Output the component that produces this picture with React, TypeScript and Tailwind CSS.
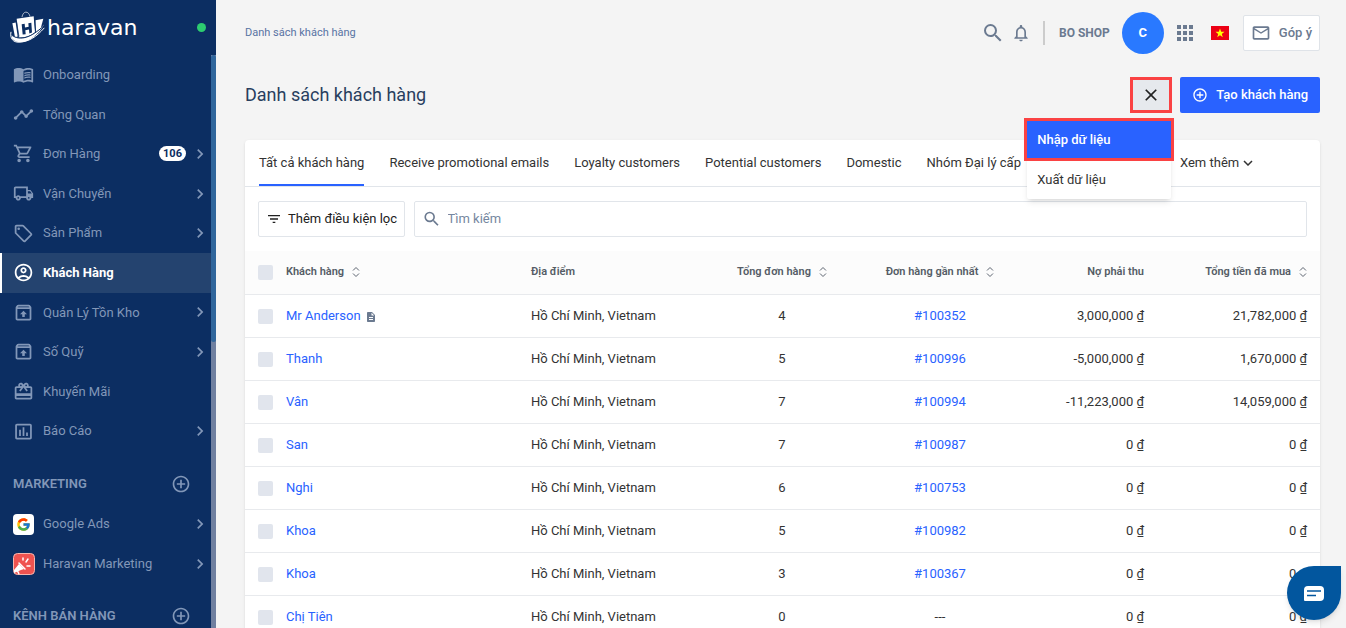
import React from 'react';
import {
    MdAddCircleOutline,
    MdApps,
    MdChevronRight,
    MdClose,
    MdDescription,
    MdFilterList,
    MdInsertChartOutlined,
    MdMailOutline,
    MdMenuBook,
    MdNotificationsNone,
    MdOutlineAccountCircle,
    MdOutlineLocalOffer,
    MdOutlineLocalShipping,
    MdOutlineRedeem,
    MdOutlineShoppingCart,
    MdOutlineUnarchive,
    MdSearch,
    MdTimeline,
} from 'react-icons/md';
import { FcGoogle } from 'react-icons/fc';

const menu = [
    { label: 'Onboarding', icon: MdMenuBook },
    { label: 'Tổng Quan', icon: MdTimeline },
    { label: 'Đơn Hàng', icon: MdOutlineShoppingCart, badge: 106, arrow: true },
    { label: 'Vận Chuyển', icon: MdOutlineLocalShipping, arrow: true },
    { label: 'Sản Phẩm', icon: MdOutlineLocalOffer, arrow: true },
    { label: 'Khách Hàng', icon: MdOutlineAccountCircle, active: true },
    { label: 'Quản Lý Tồn Kho', icon: MdOutlineUnarchive, arrow: true },
    { label: 'Số Quỹ', icon: MdOutlineUnarchive, arrow: true },
    { label: 'Khuyến Mãi', icon: MdOutlineRedeem },
    { label: 'Báo Cáo', icon: MdInsertChartOutlined, arrow: true },
];

const tabs = [
    'Tất cả khách hàng',
    'Receive promotional emails',
    'Loyalty customers',
    'Potential customers',
    'Domestic',
    'Nhóm Đại lý cấp',
];

const customers = [
    { name: 'Mr Anderson', orders: 4, last: '#100352', debt: '3,000,000 ₫', total: '21,782,000 ₫', note: true },
    { name: 'Thanh', orders: 5, last: '#100996', debt: '-5,000,000 ₫', total: '1,670,000 ₫' },
    { name: 'Vân', orders: 7, last: '#100994', debt: '-11,223,000 ₫', total: '14,059,000 ₫' },
    { name: 'San', orders: 7, last: '#100987', debt: '0 ₫', total: '0 ₫' },
    { name: 'Nghi', orders: 6, last: '#100753', debt: '0 ₫', total: '0 ₫' },
    { name: 'Khoa', orders: 5, last: '#100982', debt: '0 ₫', total: '0 ₫' },
    { name: 'Khoa', orders: 3, last: '#100367', debt: '0 ₫', total: '0 ₫' },
    { name: 'Chị Tiên', orders: 0, last: '', debt: '0 ₫', total: '0 ₫' },
];

const checkboxClass = 'block size-[15px] appearance-none rounded-xs bg-[#e1e5ed] checked:bg-[#2962ff]';

function Logo() {
    return (
        <a href="#" className="flex items-center gap-0.5 text-white" aria-label="haravan">
            <svg viewBox="0 0 105 98" className="h-[33px] w-[35px]" fill="none">
                <path d="M36 18C38 7 43 3 48 3c6 0 10 5 12 13" stroke="currentColor" strokeWidth="2" />
                <path d="M7 36l10-2 6 42-8 2z" fill="currentColor" />
                <path d="M20 23l51-8 4 48c-15 12-30 17-48 16z" fill="currentColor" />
                <path d="M76 27l24-4-8 29-16 12z" fill="currentColor" />
                <path d="M35 39l9-1 1 11 11-2-1-11 9-1 2 29-8 3-1-12-11 2 1 12-9 1z" fill="#0c2e62" />
                <path d="M74 17l3 46" stroke="#0c2e62" strokeWidth="3" />
                <path d="M19 30l8 46" stroke="#0c2e62" strokeWidth="2" />
                <path d="M5 71c22 20 62 9 98-32-24 44-73 71-97 43z" fill="currentColor" />
                <path d="M3 62c-4 20 7 32 24 31 31-1 53-17 76-43" stroke="currentColor" strokeWidth="3" />
                <path d="M5 72c25 18 58 8 96-28" stroke="#0c2e62" strokeWidth="3" />
            </svg>
            <span className="font-['DejaVu_Sans'] text-[22px] leading-8">haravan</span>
        </a>
    );
}

function MarketingIcon() {
    return (
        <svg viewBox="0 0 22 22" className="size-[22px]" fill="none">
            <rect x="0.5" y="0.5" width="21" height="21" rx="4" fill="#ef5350" stroke="#f6b6ae" />
            <path d="M1 17l5-6 5 5-3 1-7 3z" fill="#fff" />
            <path d="M6 10l6 6" stroke="#fff" strokeWidth="1.500" strokeLinecap="round" />
            <path d="M4 17l2 4" stroke="#fff" strokeWidth="1.500" />
            <path d="M10 7V5M13 9l2-3M14 13h3" stroke="#fff" strokeWidth="1.500" strokeLinecap="round" />
        </svg>
    );
}

function SortIcon() {
    return (
        <svg viewBox="0 0 8 12" className="ml-2 inline-block h-3 w-2" fill="none" stroke="#5c6470">
            <path d="M1 4.500L4 1.500l3 3M1 7.500l3 3 3-3" />
        </svg>
    );
}

function SectionTitle({ children }: { children: React.ReactNode }) {
    return (
        <div className="mt-[13px] flex h-10 items-center justify-between pr-5 pl-[13px]">
            <h2 className="text-[13px] font-semibold">{children}</h2>
            <button type="button" aria-label="Thêm">
                <MdAddCircleOutline className="size-5" />
            </button>
        </div>
    );
}

function Sidebar() {
    return (
        <aside className="flex w-[216px] shrink-0 flex-col overflow-hidden bg-[#0c2e62] text-[#8297b8]">
            <div className="flex h-[55px] shrink-0 items-center justify-between px-2.5">
                <Logo />
                <span className="size-[9px] rounded-full bg-[#2dcc70]" />
            </div>

            <div className="flex min-h-0 flex-1">
                <nav className="min-w-0 flex-1 overflow-hidden">
                    <ul className="grid h-[396px] auto-rows-fr">
                        {menu.map(({ label, icon: Icon, badge, arrow, active }) => (
                            <li key={label}>
                                <a
                                    href="#"
                                    className={`flex h-full items-center border-l-2 pr-px pl-[11px] text-[13px] ${
                                        active ? 'border-white bg-[#24436f] font-bold text-white' : 'border-transparent'
                                    }`}
                                >
                                    <Icon className="mr-[9px] size-[21px]" />
                                    <span className="flex-1">{label}</span>
                                    {badge && (
                                        <span className="mr-1 rounded-full bg-white px-1 text-[11px] leading-[15px] font-bold text-[#0c2e62]">
                                            {badge}
                                        </span>
                                    )}
                                    {arrow && <MdChevronRight className="size-5" />}
                                </a>
                            </li>
                        ))}
                    </ul>

                    <SectionTitle>MARKETING</SectionTitle>
                    <a href="#" className="flex h-10 items-center pr-px pl-[13px] text-[13px]">
                        <span className="mr-[9px] flex size-[21px] items-center justify-center rounded bg-white">
                            <FcGoogle className="size-[15px]" />
                        </span>
                        <span className="flex-1">Google Ads</span>
                        <MdChevronRight className="size-5" />
                    </a>
                    <a href="#" className="flex h-[39px] items-center pr-px pl-[13px] text-[13px]">
                        <span className="mr-2">
                            <MarketingIcon />
                        </span>
                        <span className="flex-1">Haravan Marketing</span>
                        <MdChevronRight className="size-5" />
                    </a>

                    <SectionTitle>KÊNH BÁN HÀNG</SectionTitle>
                </nav>

                {/* Scroll track */}
                <div className="w-[5px] bg-[#7080a0]">
                    <div className="h-1/2 rounded-sm bg-[#30669c]" />
                </div>
            </div>
        </aside>
    );
}

function TopBar() {
    return (
        <header className="flex h-[66px] items-center justify-between text-[#6b7a90]">
            <a href="#" className="text-[11px] text-[#5873a3]">
                Danh sách khách hàng
            </a>
            <div className="flex items-center">
                <button type="button" aria-label="Tìm kiếm">
                    <MdSearch className="size-6" />
                </button>
                <button type="button" aria-label="Thông báo" className="ml-1.5">
                    <MdNotificationsNone className="size-5" />
                </button>
                <span className="ml-3 h-6 w-0.5 bg-[#cccccc]" />
                <span className="ml-3.5 text-xs font-bold">BO SHOP</span>
                <button type="button" className="ml-3 size-[42px] rounded-full bg-[#2979ff] text-[13px] font-bold text-white">
                    C
                </button>
                <button type="button" aria-label="Ứng dụng" className="ml-[9px]">
                    <MdApps className="size-6" />
                </button>
                <svg viewBox="0 0 18 14" className="ml-3.5 h-3.5 w-[18px]">
                    <rect width="18" height="14" fill="#ec0015" />
                    <path d="M9 2.500l1.200 3.300h3.300l-2.700 2.100 1 3.400L9 9.300l-2.800 2 1-3.400L4.500 5.800h3.300z" fill="#ff0" />
                </svg>
                <button
                    type="button"
                    className="ml-3.5 flex h-9 items-center gap-2 rounded-xs border border-[#dfe3e8] bg-white px-[7px] text-[13px] font-medium"
                >
                    <MdMailOutline className="size-5" />
                    Góp ý
                </button>
            </div>
        </header>
    );
}

function ImportMenu() {
    return (
        <div className="relative">
            <button
                type="button"
                aria-label="Đóng"
                className="flex h-9 w-[42px] items-center justify-center border-3 border-[#fa4243] bg-[#e6e9ed] text-[#212121]"
            >
                <MdClose className="size-5" />
            </button>
            <div className="absolute top-11 right-px z-10 w-36 rounded-xs bg-white text-[13px] shadow-md">
                <button
                    type="button"
                    className="block h-[37px] w-full bg-[#2962ff] px-2.5 pt-px text-left font-medium text-white outline-3 outline-[#fa4243]"
                >
                    Nhập dữ liệu
                </button>
                <button type="button" className="mt-px block h-10 w-full px-2.5 pt-px text-left text-[#333333]">
                    Xuất dữ liệu
                </button>
            </div>
        </div>
    );
}

function CustomerTable() {
    return (
        <table className="w-full table-fixed text-[13px] text-[#333333]">
            <colgroup>
                <col className="w-[41px]" />
                <col />
                <col className="w-[176px]" />
                <col className="w-[150px]" />
                <col className="w-[166px]" />
                <col className="w-[134px]" />
                <col className="w-[163px]" />
            </colgroup>
            <thead>
                <tr className="h-[43px] border-b border-[#e8eaed] bg-[#fcfcfc] text-[11px] text-[#555c66] [&>th]:font-semibold">
                    <th className="pl-[13px]">
                        <input type="checkbox" aria-label="Chọn tất cả" className={checkboxClass} />
                    </th>
                    <th className="text-left">
                        Khách hàng
                        <SortIcon />
                    </th>
                    <th className="text-left">Địa điểm</th>
                    <th>
                        Tổng đơn hàng
                        <SortIcon />
                    </th>
                    <th>
                        Đơn hàng gần nhất
                        <SortIcon />
                    </th>
                    <th className="pr-[13px] text-right">Nợ phải thu</th>
                    <th className="pr-[13px] text-right">
                        Tổng tiền đã mua
                        <SortIcon />
                    </th>
                </tr>
            </thead>
            <tbody>
                {customers.map((c, i) => (
                    <tr key={i} className="h-[43px] border-b border-[#e8eaed] [&>td]:pt-px">
                        <td className="pl-[13px]">
                            <input type="checkbox" aria-label={c.name} className={checkboxClass} />
                        </td>
                        <td>
                            <a href="#" className="text-[#2962ff]">
                                {c.name}
                            </a>
                            {c.note && <MdDescription className="ml-1 inline-block size-3 text-[#6b7a90]" />}
                        </td>
                        <td>Hồ Chí Minh, Vietnam</td>
                        <td className="text-center">{c.orders}</td>
                        <td className="text-center">
                            {c.last ? (
                                <a href="#" className="text-[#2962ff]">
                                    {c.last}
                                </a>
                            ) : (
                                '---'
                            )}
                        </td>
                        <td className="pr-[13px] text-right">{c.debt}</td>
                        <td className="pr-[13px] text-right">{c.total}</td>
                    </tr>
                ))}
            </tbody>
        </table>
    );
}

export default function App() {
    return (
        <div className="flex h-screen overflow-hidden bg-[#f4f4f4] font-[Roboto,sans-serif]">
            <Sidebar />

            <main className="min-w-0 flex-1 pr-[26px] pl-[29px]">
                <TopBar />

                <div className="mt-[11px] flex h-9 items-center justify-between">
                    <h1 className="text-lg text-[#283e5e]">Danh sách khách hàng</h1>
                    <div className="flex gap-2">
                        <ImportMenu />
                        <button
                            type="button"
                            className="flex h-9 items-center gap-2 rounded-xs bg-[#2962ff] px-3 text-[13px] font-medium text-white"
                        >
                            <MdAddCircleOutline className="size-4" />
                            Tạo khách hàng
                        </button>
                    </div>
                </div>

                <section className="mt-[27px] overflow-hidden rounded-t bg-white shadow-sm">
                    {/* Tabs */}
                    <div className="flex h-[47px] gap-[25px] border-b border-[#e1e5ea] px-3.5 text-[13px] text-[#333333]">
                        {tabs.map((tab, i) => (
                            <button
                                key={tab}
                                type="button"
                                className={`whitespace-nowrap border-b-2 pt-0.5 ${i === 0 ? 'border-[#2962ff]' : 'border-transparent'}`}
                            >
                                {tab}
                            </button>
                        ))}
                        <button type="button" className="ml-[134px] flex items-center gap-1 whitespace-nowrap">
                            Xem thêm
                            <svg viewBox="0 0 10 6" className="h-1.5 w-2.5" fill="none" stroke="currentColor" strokeWidth="1.500">
                                <path d="M1 1l4 4 4-4" />
                            </svg>
                        </button>
                    </div>

                    {/* Filter + search */}
                    <div className="flex gap-[9px] px-[13px] py-3.5 text-[13px]">
                        <button
                            type="button"
                            className="flex h-9 items-center gap-1.5 whitespace-nowrap rounded-xs border border-[#e1e5ea] px-[7px] text-[#212121]"
                        >
                            <MdFilterList className="size-4" />
                            Thêm điều kiện lọc
                        </button>
                        <label className="flex h-9 flex-1 items-center gap-1.5 rounded-xs border border-[#e1e5ea] px-[7px]">
                            <MdSearch className="size-5 text-[#6b7a90]" />
                            <input
                                type="text"
                                aria-label="Tìm kiếm"
                                placeholder="Tìm kiếm"
                                className="w-full outline-none placeholder:text-[#7587a0]"
                            />
                        </label>
                    </div>

                    <CustomerTable />
                </section>
            </main>

            {/* Chat */}
            <button
                type="button"
                aria-label="Chat"
                className="fixed right-[5px] bottom-2 z-20 flex size-[54px] items-center justify-center rounded-full rounded-tr-lg bg-[#02569e] shadow-md"
            >
                <svg viewBox="0 0 20 15" className="h-[15px] w-5">
                    <path d="M4 0h12a4 4 0 0 1 4 4v7a4 4 0 0 1-4 4H1a1 1 0 0 1-1-1V4a4 4 0 0 1 4-4z" fill="#fff" />
                    <path d="M3 5h14M3 9.500h9" stroke="#02569e" strokeWidth="1.500" />
                </svg>
            </button>
        </div>
    );
}
